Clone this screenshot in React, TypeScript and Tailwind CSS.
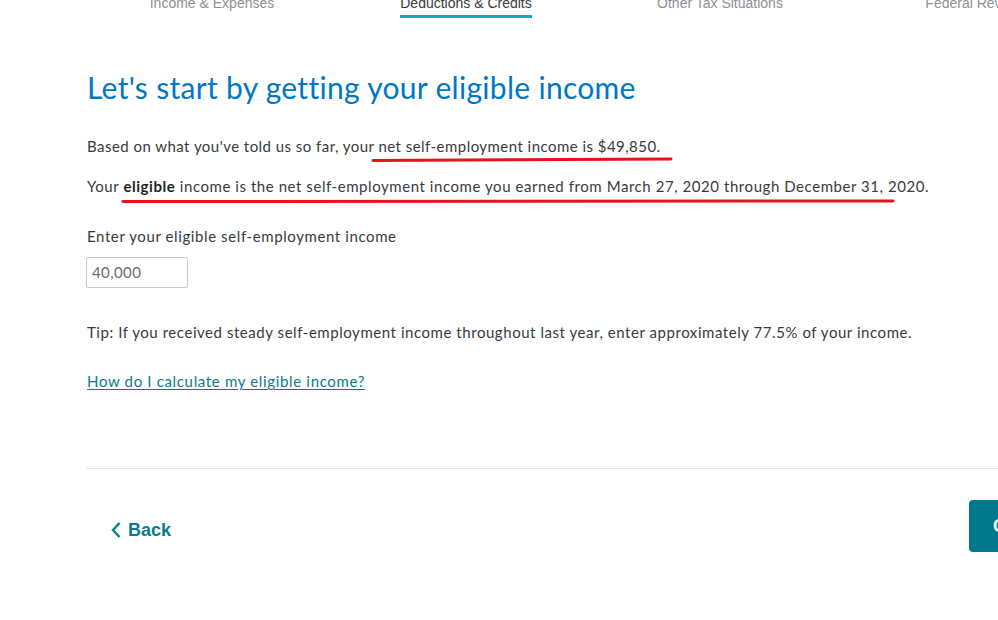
import React from "react";

const tabs = [
  { label: "Income & Expenses", active: false },
  { label: "Deductions & Credits", active: true },
  { label: "Other Tax Situations", active: false },
  { label: "Federal Review", active: false },
];

export default function App() {
  return (
    <div className="w-[998px] h-[620px] overflow-hidden bg-white relative" style={{ fontFamily: "Lato, 'Open Sans', sans-serif" }}>
      {/* top tabs */}
      <div className="flex pl-[85px] -mt-[7px] whitespace-nowrap" style={{ fontFamily: "'Liberation Sans', Arial, sans-serif" }}>
        {tabs.map((t) => (
          <div key={t.label} className="w-[254px] shrink-0 flex justify-center">
            <span
              className={
                "text-[14px] leading-[20px] pb-[2px] border-b-[3px] " +
                (t.active ? "text-[#393a3d] border-[#1aa6b8]" : "text-[#8d9096] border-transparent")
              }
            >
              {t.label}
            </span>
          </div>
        ))}
      </div>

      <div className="pl-[87px] w-[1100px]">
        <h1 className="text-[30px] leading-[40px] text-[#0077c5] mt-[49px] tracking-[0.3px]">
          Let's start by getting your eligible income
        </h1>

        <div className="relative mt-[29px] text-[15px] leading-[20px] text-[#393a3d]">
          <p className="tracking-[0.46px]">Based on what you've told us so far, your net self-employment income is $49,850.</p>
          <p className="mt-[20px] tracking-[0.56px]">
            Your <b className="font-bold text-[#1f1f1f]">eligible</b> income is the net self-employment income you earned from March 27, 2020 through December 31, 2020.
          </p>
          <svg className="absolute left-[-87px] top-[-133px] pointer-events-none" width="998" height="220">
            <path d="M373 157.5 L671 156" stroke="#e3141b" strokeWidth="3" strokeLinecap="round" fill="none" />
            <path d="M123 198.5 Q500 197.5 893 198" stroke="#e3141b" strokeWidth="3" strokeLinecap="round" fill="none" />
          </svg>
        </div>

        <label className="block mt-[30px] text-[15px] leading-[20px] text-[#393a3d] tracking-[0.6px]">
          Enter your eligible self-employment income
        </label>
        <div className="-ml-[1px] mt-[11px] w-[102px] h-[31px] border border-[#c7c9cc] rounded-[2px] flex items-center pl-[5px] text-[15px] text-[#6b6c72] tracking-[0.4px]">
          40,000
        </div>

        <p className="mt-[34px] text-[15px] leading-[20px] text-[#393a3d] tracking-[0.55px]">
          Tip: If you received steady self-employment income throughout last year, enter approximately 77.5% of your income.
        </p>

        <p className="mt-[29px] text-[15px] leading-[20px] tracking-[0.66px]">
          <a href="#" className="text-[#0b7b8b] underline underline-offset-[2px]">How do I calculate my eligible income?</a>
        </p>

        <div className="-ml-[1px] mt-[77px] border-t border-[#e6e6e6]" />

        <div className="flex items-center mt-[31px]">
          <div className="ml-[23px] flex items-center text-[#0b7b8b] mt-[8px]" style={{ fontFamily: "'Liberation Sans', Arial, sans-serif" }}>
            <svg width="12" height="18" viewBox="0 0 12 18" className="mr-[6px]">
              <path d="M9.5 2 L3 9 L9.5 16" stroke="#0b7b8b" strokeWidth="2.4" fill="none" />
            </svg>
            <span className="text-[18px] font-bold leading-[22px]">Back</span>
          </div>
          <div className="ml-[798px] w-[140px] h-[52px] rounded-[4px] bg-[#00798b] flex items-center pl-[24px] text-white text-[18px] font-bold" style={{ fontFamily: "'Liberation Sans', Arial, sans-serif" }}>
            Continue
          </div>
        </div>
      </div>
    </div>
  );
}
